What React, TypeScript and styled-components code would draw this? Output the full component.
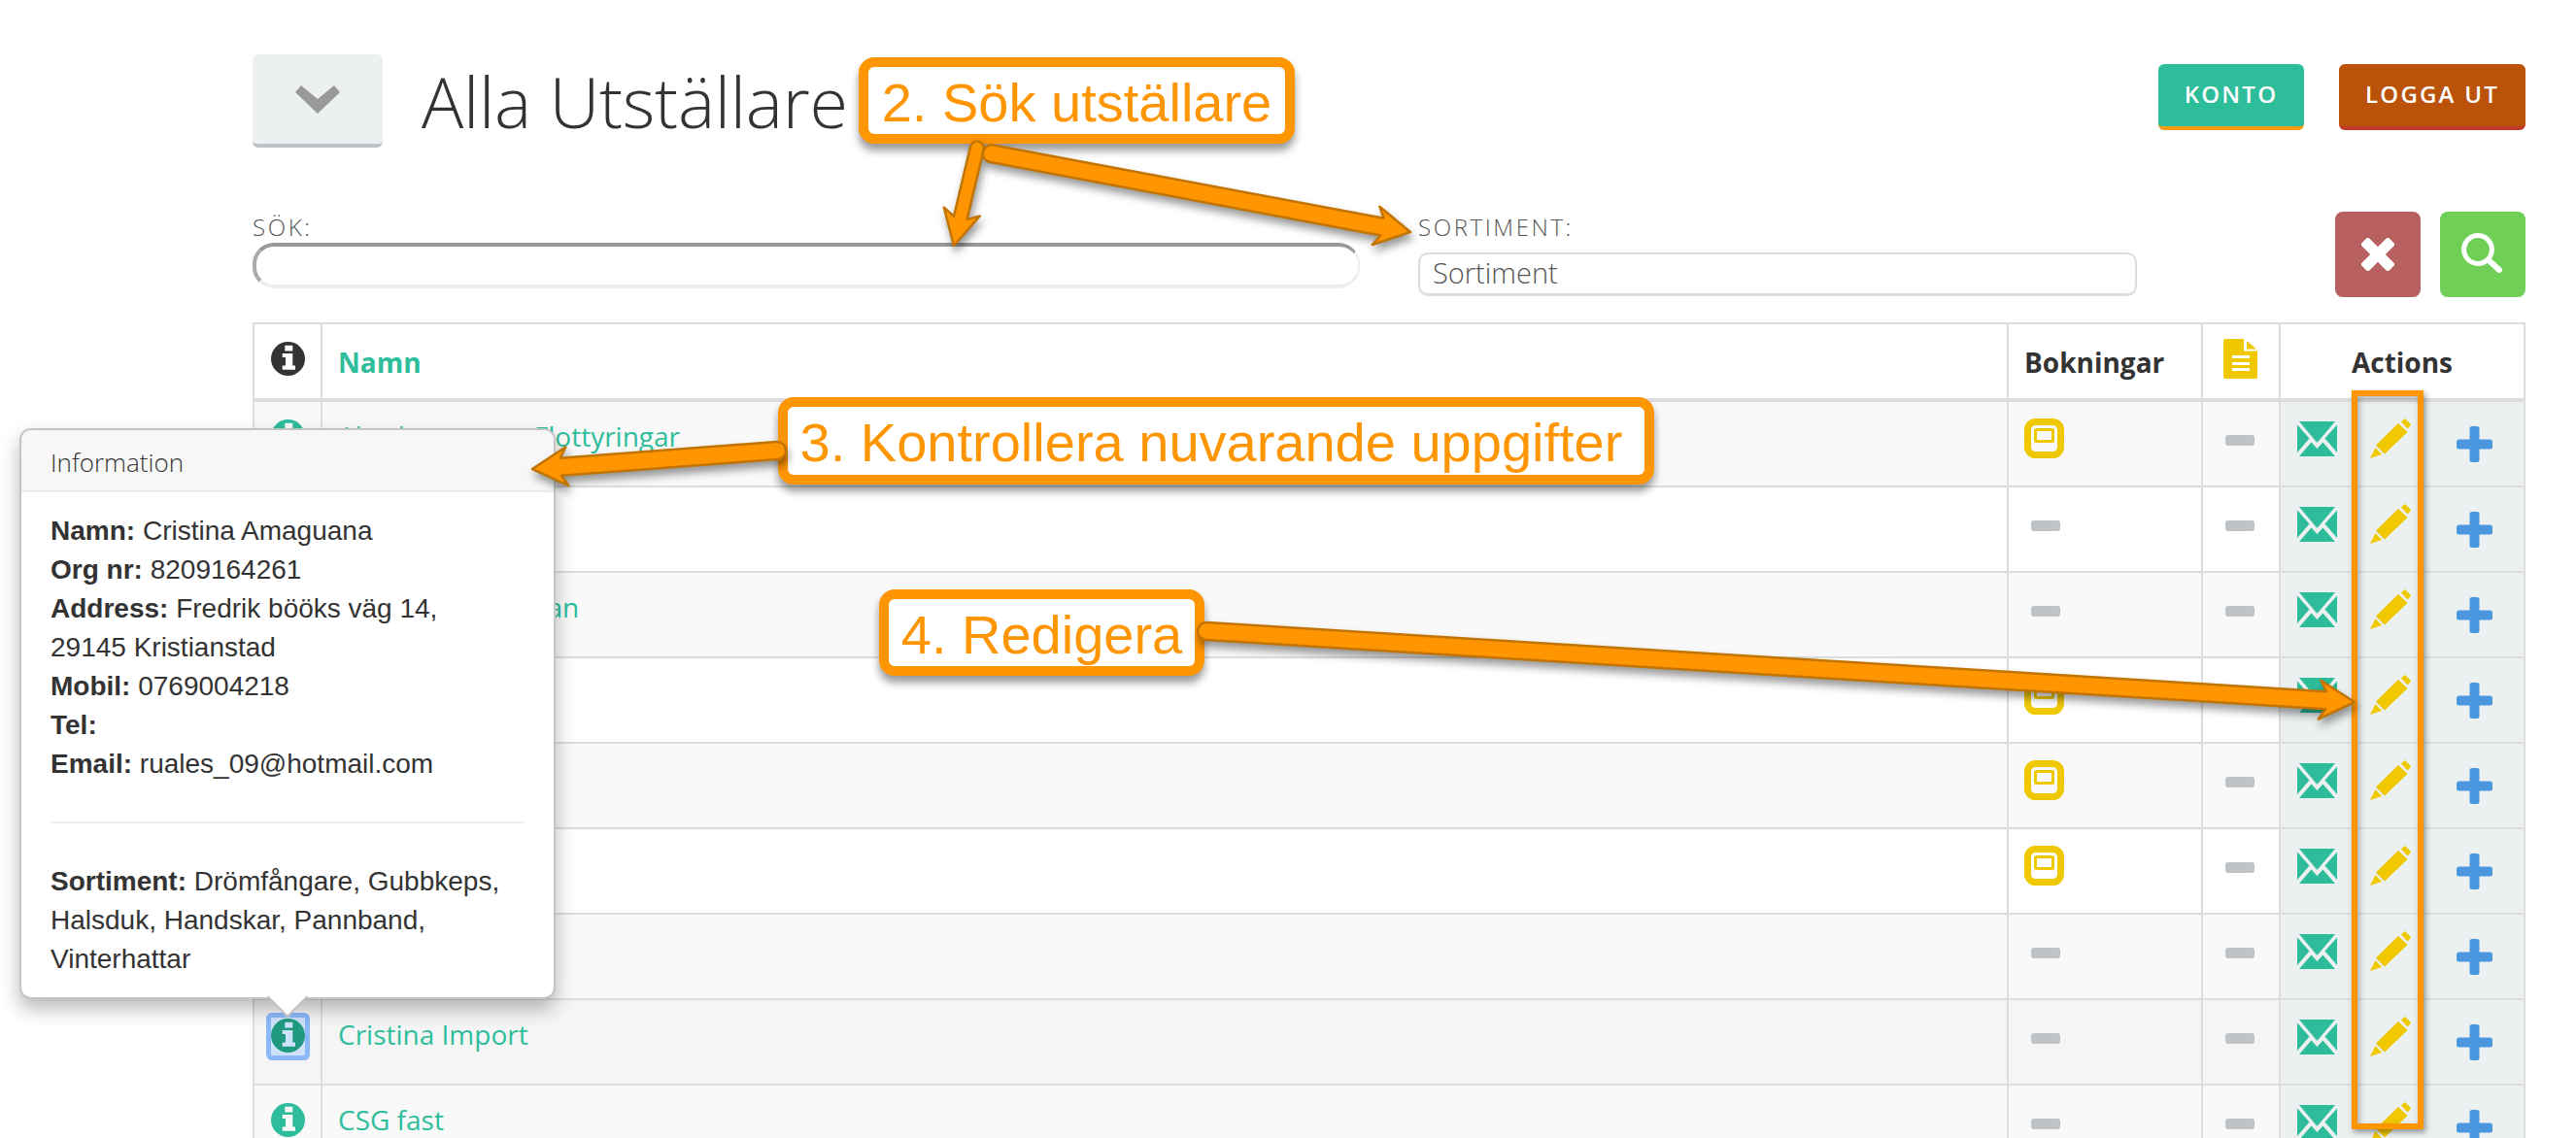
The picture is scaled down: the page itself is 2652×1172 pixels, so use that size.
import React from 'react';
import styled, { createGlobalStyle } from 'styled-components';

const GlobalStyle = createGlobalStyle`
  html, body { margin: 0; padding: 0; background: #fff; overflow: hidden; }
  * { box-sizing: border-box; }
`;

const Page = styled.div`
  position: relative;
  width: 2652px;
  height: 1172px;
  overflow: hidden;
  padding: 56px 52px 0 260px;
  font-family: "Open Sans", sans-serif;
  color: #333;
`;

const TopBar = styled.header`
  display: flex;
  align-items: flex-start;
  height: 162px;
`;

const MenuButton = styled.button`
  width: 134px;
  height: 96px;
  border: 0;
  border-bottom: 4px solid #bdc3c7;
  border-radius: 6px;
  background: #ecf0f1;
  display: flex;
  align-items: center;
  justify-content: center;
  padding: 0;
`;

const Title = styled.h1`
  flex: 1;
  margin: 0 0 0 40px;
  font-weight: 300;
  font-size: 72px;
  letter-spacing: -0.25px;
  line-height: 96px;
  color: #333;
`;

const AccountButtons = styled.div`
  display: flex;
  gap: 36px;
  margin-top: 10px;
`;

const AccountButton = styled.button<{ $bg: string; $edge: string; $w: number }>`
  width: ${p => p.$w}px;
  height: 68px;
  padding: 0 0 4px;
  border: 0;
  border-bottom: 4px solid ${p => p.$edge};
  border-radius: 6px;
  background: ${p => p.$bg};
  color: #fff;
  font-family: "Open Sans", sans-serif;
  font-weight: 600;
  font-size: 24px;
  letter-spacing: 2.2px;
`;

const FilterRow = styled.form`
  display: flex;
  align-items: flex-start;
  height: 88px;
  margin: 0 0 26px;
`;

const Field = styled.label<{ $w: number; $ml: number }>`
  display: flex;
  flex-direction: column;
  width: ${p => p.$w}px;
  margin-left: ${p => p.$ml}px;
`;

const FieldLabel = styled.span`
  font-size: 24px;
  line-height: 32px;
  font-weight: 300;
  letter-spacing: 2.6px;
  color: #555;
`;

const SearchInput = styled.div`
  width: 100%;
  height: 47px;
  border-radius: 22px;
  border: 2px solid #eee;
  border-top: 4px solid #999;
  border-left: 4px solid #aaa;
  border-bottom: 4px solid #eee;
  background: #fff;
`;

const SortInput = styled.div`
  width: 100%;
  height: 45px;
  margin-top: 10px;
  padding: 0 13px;
  border: 2px solid #ddd;
  border-bottom-width: 3px;
  border-radius: 10px;
  background: #fff;
  font-size: 29px;
  line-height: 38px;
  font-weight: 300;
  color: #555;
`;

const SquareButtons = styled.div`
  display: flex;
  gap: 20px;
  margin-left: auto;
`;

const SquareButton = styled.button<{ $bg: string }>`
  width: 88px;
  height: 88px;
  border: 0;
  padding: 0;
  border-radius: 8px;
  background: ${p => p.$bg};
  display: flex;
  align-items: center;
  justify-content: center;
`;

const Table = styled.div`
  width: 2340px;
  border-top: 2px solid #ddd;
  border-left: 2px solid #ddd;
`;

const Row = styled.div<{ $bg?: string; $head?: boolean }>`
  display: grid;
  grid-template-columns: 70px 1736px 200px 80px 252px;
  height: ${p => (p.$head ? 80 : 88)}px;
  background: ${p => p.$bg || '#fff'};
  border-bottom: ${p => (p.$head ? 4 : 2)}px solid #ddd;
`;

const Cell = styled.div`
  border-right: 2px solid #ddd;
  min-width: 0;
`;

const HeadCell = styled(Cell)<{ $center?: boolean; $pad?: number; $color?: string }>`
  display: flex;
  align-items: center;
  justify-content: ${p => (p.$center ? 'center' : 'flex-start')};
  padding: 2px 0 0 ${p => p.$pad || 0}px;
  font-weight: 700;
  font-size: 28px;
  color: ${p => p.$color || '#333'};
`;

const InfoCell = styled(Cell)<{ $dark?: boolean }>`
  display: flex;
  justify-content: center;
  padding-top: 18px;
  color: ${p => (p.$dark ? '#333' : '#2ebd9b')};
  svg { display: block; width: 35px; height: 35px; }
`;

const FocusRing = styled.span`
  display: block;
  width: 45px;
  height: 49px;
  margin-top: -5px;
  padding: 6px 5px;
  border-radius: 6px;
  background: #cfe2fb;
  box-shadow: inset 0 0 0 5px #8ab8f8;
  color: #1f9a80;
`;

const NameCell = styled(Cell)`
  padding: 15px 0 0 16px;
  font-size: 28px;
  line-height: 40px;
  color: #2ebd9b;
  white-space: nowrap;
`;

const IconCell = styled(Cell)`
  padding: 17px 0 0 16px;
`;

const DocCell = styled(Cell)`
  padding: 15px 0 0 21px;
`;

const Dash = styled.span`
  display: block;
  width: 30px;
  height: 11px;
  margin: 17px 0 0 7px;
  border-radius: 3px;
  background: #bdc3c7;
`;

const ActionCell = styled(Cell)`
  display: grid;
  grid-template-columns: 75px 76px 97px;
  background: #ecf0f1;
`;

const ActionSlot = styled.div<{ $top: number }>`
  display: flex;
  justify-content: center;
  padding-top: ${p => p.$top}px;
`;

const Popover = styled.aside`
  position: absolute;
  left: 20px;
  top: 441px;
  width: 552px;
  height: 588px;
  background: #fff;
  border: 2px solid #c4c4c4;
  border-radius: 12px;
  box-shadow: 0 10px 20px rgba(0, 0, 0, 0.28);
  font-family: "Liberation Sans", Arial, sans-serif;
  font-size: 28px;
  line-height: 40px;
  color: #333;
`;

const PopoverTitle = styled.div`
  height: 64px;
  padding: 0 30px;
  background: #f7f7f7;
  border-bottom: 2px solid #ebebeb;
  border-radius: 10px 10px 0 0;
  font-family: "Open Sans", sans-serif;
  font-weight: 300;
  font-size: 26px;
  line-height: 66px;
`;

const PopoverBody = styled.div`
  padding: 20px 30px 0;
`;

const PopoverLine = styled.div`
  white-space: nowrap;
`;

const PopoverRule = styled.hr`
  margin: 39px 0 40px;
  border: 0;
  height: 2px;
  background: #eee;
`;

const PopoverTip = styled.span`
  position: absolute;
  left: 259px;
  bottom: -15px;
  width: 30px;
  height: 30px;
  background: #fff;
  transform: rotate(45deg);
  border-right: 2px solid #bbb;
  border-bottom: 2px solid #bbb;
`;

const Callout = styled.div<{ $x: number; $y: number; $w: number; $h: number; $shift?: number }>`
  position: absolute;
  left: ${p => p.$x}px;
  top: ${p => p.$y}px;
  width: ${p => p.$w}px;
  height: ${p => p.$h}px;
  padding-right: ${p => p.$shift || 0}px;
  border: 10px solid #ff9500;
  border-radius: 16px;
  background: #fff;
  box-shadow: 0 7px 8px rgba(0, 0, 0, 0.4);
  font-family: "Liberation Sans", Arial, sans-serif;
  font-size: 56px;
  line-height: ${p => p.$h - 16}px;
  text-align: center;
  color: #ff9500;
  white-space: nowrap;
`;

const Highlight = styled.div`
  position: absolute;
  left: 2421px;
  top: 402px;
  width: 74px;
  height: 761px;
  border: 6px solid #ff9500;
  box-shadow: 2px 3px 6px rgba(0, 0, 0, 0.4), inset 2px 3px 6px rgba(0, 0, 0, 0.3);
`;

const ArrowLayer = styled.svg`
  position: absolute;
  left: 0;
  top: 0;
  pointer-events: none;
  filter: drop-shadow(2px 6px 4px rgba(0, 0, 0, 0.4));
`;

const arrow = (x1: number, y1: number, x2: number, y2: number, w: number, hw: number, hl: number) => {
  const len = Math.hypot(x2 - x1, y2 - y1);
  const ux = (x2 - x1) / len;
  const uy = (y2 - y1) / len;
  const px = -uy;
  const py = ux;
  const pt = (along: number, side: number) =>
    `${(x1 + ux * along + px * side).toFixed(1)} ${(y1 + uy * along + py * side).toFixed(1)}`;
  return `M${pt(0, w / 2)} L${pt(len - hl * 0.82, w / 2)} L${pt(len - hl, hw / 2)} L${pt(len, 0)} L${pt(len - hl, -hw / 2)} L${pt(len - hl * 0.82, -w / 2)} L${pt(0, -w / 2)} A${w / 2} ${w / 2} 0 0 0 ${pt(0, w / 2)} Z`;
};

const InfoIcon = () => (
  <svg viewBox="0 0 35 35">
    <path
      fill="currentColor"
      fillRule="evenodd"
      d="M17.5 0a17.5 17.5 0 1 1 0 35 17.5 17.5 0 0 1 0-35ZM14.3 3.8V9.4H22.3V3.8ZM11.7 12V16H15V24.4H11.7V28.7H25V24.4H22.3V12Z"
    />
  </svg>
);

const Chevron = () => (
  <svg width="46" height="29" viewBox="0 0 46 29"><path d="M0 7 6 0 23 14 40 0 46 7 23 29Z" fill="#999" /></svg>
);

const CrossIcon = () => (
  <svg width="34" height="34" viewBox="0 0 34 34" fill="#fff">
    <rect x="-3" y="11.5" width="40" height="11" rx="1.5" transform="rotate(45 17 17)" />
    <rect x="-3" y="11.5" width="40" height="11" rx="1.5" transform="rotate(-45 17 17)" />
  </svg>
);

const SearchIcon = () => (
  <svg width="44" height="44" viewBox="0 0 44 44" fill="none" stroke="#fff" strokeLinecap="round">
    <circle cx="17" cy="17" r="14.4" strokeWidth="5" />
    <path d="M28 28 39 38" strokeWidth="6" />
  </svg>
);

const DocIcon = () => (
  <svg width="35" height="41" viewBox="0 0 35 41">
    <path d="M2 0H21V12.5H35V39a2 2 0 0 1-2 2H2a2 2 0 0 1-2-2V2a2 2 0 0 1 2-2Z" fill="#f0c800" />
    <path d="M24 2 34 10.5H24Z" fill="#f0c800" />
    <path d="M9 17H27V20H9ZM9 24H27V27H9ZM9 30H27V33H9Z" fill="#fff" />
  </svg>
);

const BookIcon = () => (
  <svg width="41" height="41" viewBox="0 0 41 41" fill="none" stroke="#f0c800">
    <rect x="3.5" y="3.5" width="34" height="34" rx="8" strokeWidth="7" />
    <rect x="11.5" y="11.5" width="18" height="12" rx="1" strokeWidth="3" />
  </svg>
);

const MailIcon = () => (
  <svg width="41" height="36" viewBox="0 0 41 36" fill="#2ebd9b">
    <path d="M2 0H39L20.5 22Z" />
    <path d="M0 3.5 12.5 17.5 0 32Z" />
    <path d="M41 3.5 28.5 17.5 41 32Z" />
    <path d="M2 36 14.5 21.5 20.5 28 26.5 21.5 39 36Z" />
  </svg>
);

const PencilIcon = () => (
  <svg width="42" height="41" viewBox="0 0 42 41" fill="#f0c800">
    <path d="M0 41 5.5 30 12 37Z" />
    <path d="M6 27.5 29 5 38.5 14 15 36.5Z" />
    <path d="M32 3.5 35 .8a1.2 1.2 0 0 1 1.7 0L41.5 5.5a1.2 1.2 0 0 1 0 1.7L38.5 10.5Z" />
  </svg>
);

const PlusIcon = () => (
  <svg width="37" height="37" viewBox="0 0 37 37" fill="#4a97e0">
    <path d="M16 0H21a2.5 2.5 0 0 1 2.5 2.5V13.5H34.5A2.5 2.5 0 0 1 37 16V21a2.5 2.5 0 0 1-2.5 2.5H23.5V34.5A2.5 2.5 0 0 1 21 37H16a2.5 2.5 0 0 1-2.5-2.5V23.5H2.5A2.5 2.5 0 0 1 0 21V16a2.5 2.5 0 0 1 2.5-2.5H13.5V2.5A2.5 2.5 0 0 1 16 0Z" />
  </svg>
);

const rows = [
  { name: 'Abrahamssons Flottyringar', book: true, bg: '#f9f9f9' },
  { name: '', book: false, bg: '#fff' },
  { name: 'Kristoffer Bergman', book: false, bg: '#f9f9f9' },
  { name: '', book: true, bg: '#fff' },
  { name: '', book: true, bg: '#f9f9f9' },
  { name: '', book: true, bg: '#fff' },
  { name: '', book: false, bg: '#f9f9f9' },
  { name: 'Cristina Import', book: false, bg: '#f5f5f5', focus: true },
  { name: 'CSG fast', book: false, bg: '#f9f9f9' },
];

const info = [
  ['Namn:', 'Cristina Amaguana'],
  ['Org nr:', '8209164261'],
  ['Address:', 'Fredrik bööks väg 14,'],
  ['', '29145 Kristianstad'],
  ['Mobil:', '0769004218'],
  ['Tel:', ''],
  ['Email:', 'ruales_09@hotmail.com'],
];

export default function App() {
  return (
    <Page>
      <GlobalStyle />
      <TopBar>
        <MenuButton type="button"><Chevron /></MenuButton>
        <Title>Alla Utställare</Title>
        <AccountButtons>
          <AccountButton type="button" $bg="#2ebd9b" $edge="#f39c12" $w={150}>KONTO</AccountButton>
          <AccountButton type="button" $bg="#ba5209" $edge="#c0392b" $w={192}>LOGGA UT</AccountButton>
        </AccountButtons>
      </TopBar>

      <FilterRow>
        <Field $w={1140} $ml={0}>
          <FieldLabel>SÖK:</FieldLabel>
          <SearchInput />
        </Field>
        <Field $w={740} $ml={60}>
          <FieldLabel>SORTIMENT:</FieldLabel>
          <SortInput>Sortiment</SortInput>
        </Field>
        <SquareButtons>
          <SquareButton type="button" $bg="#b85f5f"><CrossIcon /></SquareButton>
          <SquareButton type="button" $bg="#6fcf56"><SearchIcon /></SquareButton>
        </SquareButtons>
      </FilterRow>

      <Table>
        <Row $head>
          <InfoCell $dark><InfoIcon /></InfoCell>
          <HeadCell $pad={16} $color="#2ebd9b">Namn</HeadCell>
          <HeadCell $pad={16}>Bokningar</HeadCell>
          <DocCell><DocIcon /></DocCell>
          <HeadCell $center>Actions</HeadCell>
        </Row>
        {rows.map((r, i) => (
          <Row key={i} $bg={r.bg}>
            <InfoCell>
              {r.focus ? <FocusRing><InfoIcon /></FocusRing> : <InfoIcon />}
            </InfoCell>
            <NameCell>{r.name}</NameCell>
            <IconCell>{r.book ? <BookIcon /> : <Dash />}</IconCell>
            <IconCell><Dash /></IconCell>
            <ActionCell>
              <ActionSlot $top={20}><MailIcon /></ActionSlot>
              <ActionSlot $top={17}><PencilIcon /></ActionSlot>
              <ActionSlot $top={25}><PlusIcon /></ActionSlot>
            </ActionCell>
          </Row>
        ))}
      </Table>

      <Popover>
        <PopoverTitle>Information</PopoverTitle>
        <PopoverBody>
          {info.map(([k, v], i) => (
            <PopoverLine key={i}>{k && <b>{k}</b>}{k && v ? ' ' : ''}{v}</PopoverLine>
          ))}
          <PopoverRule />
          <PopoverLine><b>Sortiment:</b> Drömfångare, Gubbkeps,</PopoverLine>
          <PopoverLine>Halsduk, Handskar, Pannband,</PopoverLine>
          <PopoverLine>Vinterhattar</PopoverLine>
        </PopoverBody>
        <PopoverTip />
      </Popover>

      <Highlight />

      <Callout $x={884} $y={59} $w={449} $h={89}>2. Sök utställare</Callout>
      <Callout $x={801} $y={409} $w={902} $h={90} $shift={10}>3. Kontrollera nuvarande uppgifter</Callout>
      <Callout $x={905} $y={607} $w={335} $h={89}>4. Redigera</Callout>

      <ArrowLayer width="2652" height="1172" viewBox="0 0 2652 1172">
        <g fill="#ff9500" stroke="#c27400" strokeWidth="2.5" strokeLinejoin="round">
          <path d={arrow(1006, 152, 982, 253, 14, 38, 36)} />
          <path d={arrow(1020, 158, 1452, 239, 18, 40, 36)} />
          <path d={arrow(800, 464, 548, 483, 18, 40, 36)} />
          <path d={arrow(1242, 650, 2424, 723, 18, 40, 36)} />
        </g>
      </ArrowLayer>
    </Page>
  );
}
